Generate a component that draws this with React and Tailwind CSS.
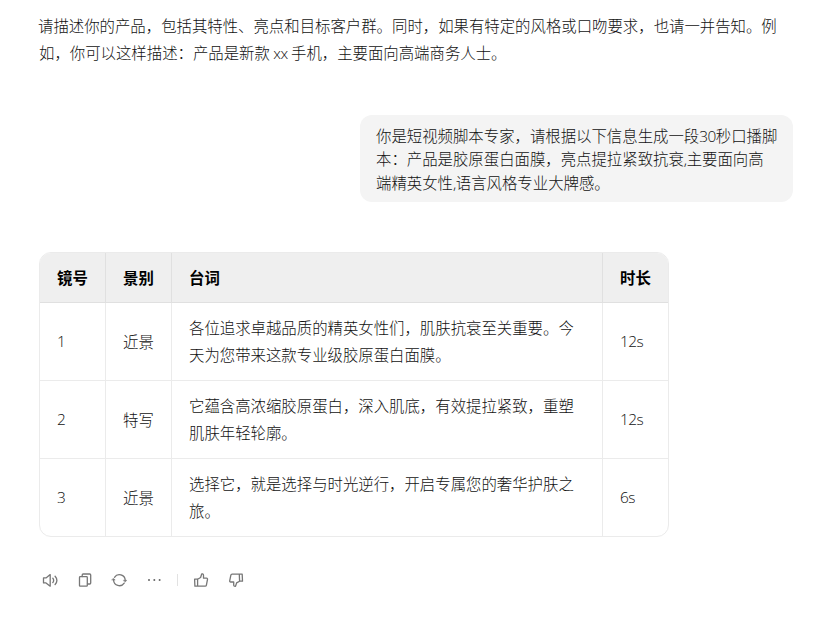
import React from 'react';

const rows = [
    { id: 1, shot: '近景', lines: ['各位追求卓越品质的精英女性们，肌肤抗衰至关重要。今', '天为您带来这款专业级胶原蛋白面膜。'], time: '12s' },
    { id: 2, shot: '特写', lines: ['它蕴含高浓缩胶原蛋白，深入肌底，有效提拉紧致，重塑', '肌肤年轻轮廓。'], time: '12s' },
    { id: 3, shot: '近景', lines: ['选择它，就是选择与时光逆行，开启专属您的奢华护肤之', '旅。'], time: '6s' },
];

const Icon = ({ children }) => (
    <svg width="16" height="16" viewBox="0 0 16 16" fill="none" stroke="#777" strokeWidth="1.3" strokeLinecap="round" strokeLinejoin="round">
        {children}
    </svg>
);

const Latin = ({ children }) => <span className="font-['Open_Sans'] text-[15.4px] leading-none tracking-[-0.5px]">{children}</span>;

const Toolbar = () => (
    <div className="mt-[35px] ml-[3px] flex h-4 items-center">
        <button>
            <Icon>
                <path d="M1.500 5.900h2.500L8.200 2.600v11.600L4 10.900H1.500Z" />
                <path d="M10.800 6.200c1 1.300 1 3.100 0 4.400M13.100 4.300c2.100 2.400 2.100 5.800 0 8.200" />
            </Icon>
        </button>
        <button className="ml-[19px]">
            <Icon>
                <rect x="2.500" y="4.600" width="7.800" height="9.600" rx="0.800" />
                <path d="M5.200 4.500V3a1 1 0 0 1 1-1h6.500a1 1 0 0 1 1 1v8a1 1 0 0 1-1 1h-2.200" />
            </Icon>
        </button>
        <button className="ml-[18px]">
            <Icon>
                <path d="M3.500 5.300a5.800 5.800 0 0 1 10.700 2.900M13.200 11.100A5.800 5.800 0 0 1 2.600 8.200" />
                <path d="M12.600 8.300h3.200l-1.600 1.700ZM1 8.100h3.200L2.600 6.400Z" fill="#777" strokeWidth="0.5" />
            </Icon>
        </button>
        <button className="ml-[19px]">
            <svg width="16" height="16" viewBox="0 0 16 16" fill="#666">
                <circle cx="3" cy="8" r="1" />
                <circle cx="8.300" cy="8" r="1" />
                <circle cx="13.600" cy="8" r="1" />
            </svg>
        </button>
        <span className="ml-[15px] h-3 w-px bg-[#e2e2e2]" />
        <button className="ml-[15px]">
            <Icon>
                <path d="M1.600 7.200h3v7H1.900ZM4.600 7.200 7.600 5.500 8.600 2.200c.2-.7 1.900-.3 1.900 1v3h3.100c.7 0 1 .5.9 1.100l-1.100 5.800c-.1.700-.6 1.100-1.300 1.100H4.600" />
            </Icon>
        </button>
        <button className="ml-[19px]">
            <Icon>
                <path d="M14.500 9.200h-2.900l-.3-7h2.900ZM11.600 9.200 8.600 10.900 7.600 14c-.2.700-1.900.3-1.900-1v-3H2.600c-.7 0-1-.5-.9-1.100l1.100-5.600c.1-.7.600-1.100 1.300-1.100h7.200" />
            </Icon>
        </button>
    </div>
);

const App = () => {
    return (
        <div className="h-[622px] w-[823px] overflow-hidden bg-white pt-3 pl-[39px] font-['Noto_Sans_CJK_SC',sans-serif] text-[15.4px] leading-[27px] font-light whitespace-nowrap text-[#111]">
            <p className="-ml-px pl-px -indent-px">
                请描述你的产品，包括其特性、亮点和目标客户群。同时，如果有特定的风格或口吻要求，也请一并告知。例<br />
                如，你可以这样描述：产品是新款 <Latin>xx</Latin> 手机，主要面向高端商务人士。
            </p>

            <div className="mt-[49px] mr-[30px] ml-auto h-[87px] w-[433px] rounded-xl bg-[#f4f4f4] px-4 pt-[9px] leading-[23.4px]">
                你是短视频脚本专家，请根据以下信息生成一段<Latin>30</Latin>秒口播脚<br />
                本：产品是胶原蛋白面膜，亮点提拉紧致抗衰<Latin>,</Latin>主要面向高<br />
                端精英女性<Latin>,</Latin>语言风格专业大牌感。
            </div>

            <div className="mt-[50px] w-[630px] overflow-hidden rounded-xl border border-[#ebebeb]">
                <div className="grid h-[50px] grid-cols-[66px_66px_431px_65px] border-b border-[#e0e0e0] bg-[#efefef] font-bold text-black">
                    <div className="flex items-center border-r border-[#e0e0e0] pb-px pl-[17px]">镜号</div>
                    <div className="flex items-center border-r border-[#e0e0e0] pb-px pl-[17px]">景别</div>
                    <div className="flex items-center border-r border-[#e0e0e0] pb-px pl-[17px]">台词</div>
                    <div className="flex items-center pb-px pl-[17px]">时长</div>
                </div>
                {rows.map((row) => (
                    <div key={row.id} className="grid h-[78px] grid-cols-[66px_66px_431px_65px] border-b border-[#ebebeb] last:h-[77px] last:border-b-0">
                        <div className="flex items-center border-r border-[#ebebeb] pt-px pl-[17px]"><Latin>{row.id}</Latin></div>
                        <div className="flex items-center border-r border-[#ebebeb] pl-[17px]">{row.shot}</div>
                        <div className="flex items-center border-r border-[#ebebeb] pb-px pl-[17px]">
                            <p>{row.lines[0]}<br />{row.lines[1]}</p>
                        </div>
                        <div className="flex items-center pt-px pl-[17px]"><Latin>{row.time}</Latin></div>
                    </div>
                ))}
            </div>

            <Toolbar />
        </div>
    );
};

export default App;
